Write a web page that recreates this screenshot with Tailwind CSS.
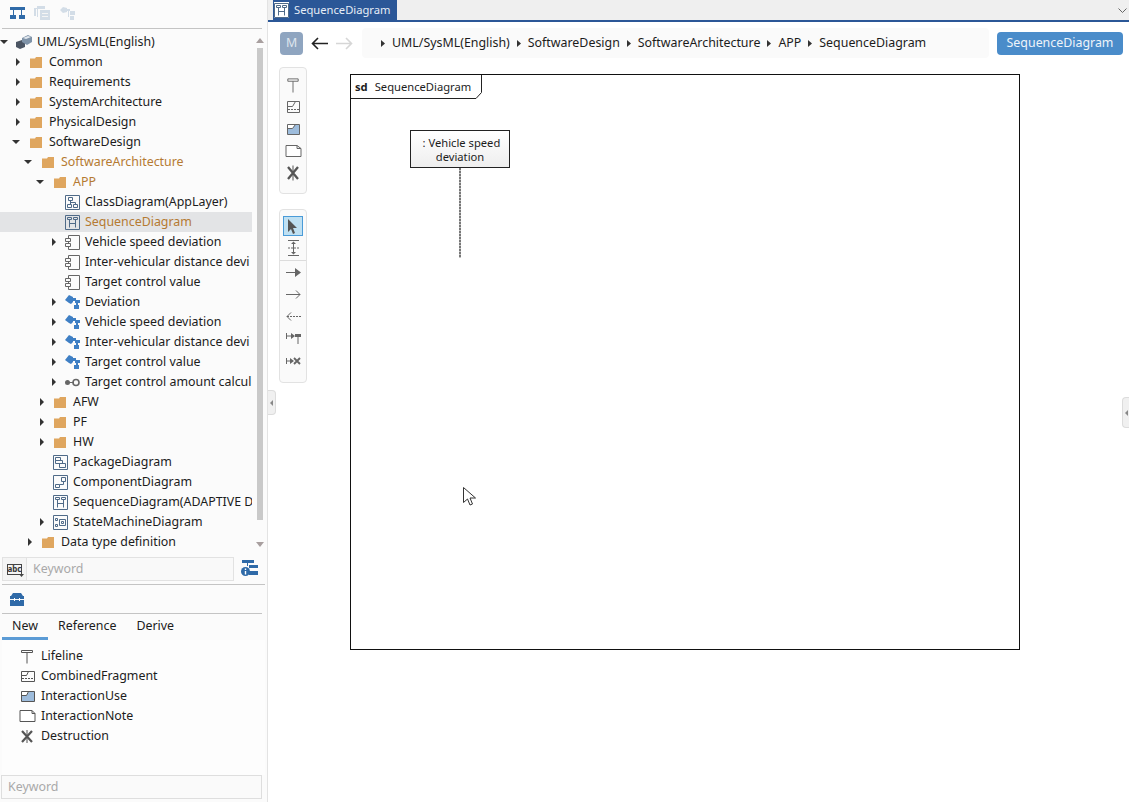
<!DOCTYPE html>
<html lang="en">
  <head>
    <meta charset="UTF-8" />
    <title>SequenceDiagram</title>
    <script src="https://cdn.jsdelivr.net/npm/@tailwindcss/browser@4"></script>
  </head>
  <body class="h-[802px] w-[1129px] overflow-hidden bg-white font-['Noto_Sans',sans-serif] text-[12.4px] text-[#1c1c1c]">
    <div class="relative flex h-full">
      <!-- Left side -->
      <aside class="flex h-full w-[268px] shrink-0 flex-col border-r border-[#e3e3e3] bg-[#fbfbfb]">
        <div class="mx-0.5 flex h-[29px] w-[260px] shrink-0 items-center gap-[9px] border-b border-[#c4c4c4] pb-0.5 pl-2">
          <svg width="15" height="13" viewBox="0 0 15 13" fill="#2f6aa8"><path d="M0 0h15v3H0zM3 3h1v5H3zM11 3h1v5h-1zM0 8h6v4H0zM9 8h6v4H9z"/></svg>
          <svg width="17" height="14" viewBox="0 0 17 14" fill="#d3dde7"><path d="M0 2h9v1H2v7H0zM3 0h8v3H4v8H3z"/><path d="M6 4h10v10H6z"/><path d="M8 7h6v1H8zM8 10h6v1H8z" fill="#f5f5f5"/></svg>
          <svg width="15" height="14" viewBox="0 0 15 14" fill="#d3dde7"><path d="M0 4l3-3 4 1v4l-4 1zM7 3h3v2H7zM10 5h5v4h-5zM10 10h4v4h-4zM8 5h1v6H8z"/></svg>
        </div>

        <div class="relative h-[528px] shrink-0 pt-[3px]">
          <div id="tree" class="w-[252px]"></div>
          <!-- scrollbar -->
          <div class="absolute top-[19px] left-[257px] h-[472px] w-[6px] bg-[#c9c9c9]"></div>
          <svg class="absolute top-[9px] left-[256px]" width="8" height="5" viewBox="0 0 8 5" fill="#a89f9f"><path d="M4 0l4 5H0z"/></svg>
          <svg class="absolute top-[513px] left-[256px]" width="8" height="5" viewBox="0 0 8 5" fill="#a89f9f"><path d="M0 0h8L4 5z"/></svg>
        </div>

        <!-- Tree search -->
        <div class="mx-0.5 flex h-[28px] shrink-0 items-start border-b border-[#c4c4c4]">
          <div class="flex h-6 w-6 items-center justify-center border border-r-0 border-[#e2e2e2] bg-[#f4f4f4]">
            <span class="relative flex h-[11px] w-[15px] items-center justify-center border border-[#444] text-[8px] leading-none font-bold text-[#333]">abc
              <svg class="absolute -right-[3px] -bottom-[3px]" width="5" height="3" viewBox="0 0 5 3" fill="#444"><path d="M0 0h5L2.500 3z"/></svg>
            </span>
          </div>
          <div class="flex h-6 w-[208px] items-center border border-[#e2e2e2] bg-[#f9f9f9] pl-1.5 text-[#a9a9a9]">Keyword</div>
          <svg class="mt-[3px] ml-[7px]" width="17" height="17" viewBox="0 0 17 17" fill="#2f6aa8"><path d="M1 0h12v3H1zM6 1h1v5H6zM8 5h9v3H8zM8 11h9v4H8z"/><circle cx="4.500" cy="11.500" r="4.500"/><path d="M3.800 8.500h1.400v1.400H3.800zM3.800 11h1.400v3.500H3.800z" fill="#fff"/></svg>
        </div>

        <!-- Toolbox -->
        <div class="mx-0.5 flex h-[29px] w-[260px] shrink-0 items-center border-b border-[#c4c4c4] pl-2">
          <svg width="14" height="13" viewBox="0 0 14 13" fill="#2f6aa8"><path d="M3 0h8l2 3H1z"/><path d="M0 3h14v3H0zM0 7h14v6H0z"/><path d="M4 5h1v3H4zM9 5h1v3H9z" fill="#fff"/></svg>
        </div>
        <div class="mx-0.5 flex h-[26px] shrink-0 items-start text-[#1c1c1c]">
          <div class="h-[26px] w-[46px] border-b-[3px] border-[#5b9bd5] pt-[3px] pl-2.5">New</div>
          <div class="pt-[3px] pl-2.5">Reference</div>
          <div class="pt-[3px] pl-5">Derive</div>
        </div>
        <div class="mx-0.5 flex-1 bg-white/60 pt-[6px]">
          <div class="flex h-5 items-center gap-[5px] pl-[17px]">
            <svg class="w-[17px]" width="17" height="15" viewBox="0 0 17 15" fill="none" stroke="#555"><path d="M2.500 1.500h11v2h-11zM8 3.500v11"/></svg>Lifeline
          </div>
          <div class="flex h-5 items-center gap-[5px] pl-[17px]">
            <svg class="w-[17px]" width="17" height="13" viewBox="0 0 17 13" fill="none" stroke="#555"><path d="M2.500 1.500h13v10h-13zM2.500 5.500h5l2-4"/><path d="M3 8.500h12" stroke-dasharray="2 1"/></svg>CombinedFragment
          </div>
          <div class="flex h-5 items-center gap-[5px] pl-[17px]">
            <svg class="w-[17px]" width="17" height="11" viewBox="0 0 17 11"><path d="M2.500.5h13v10h-13z" fill="#9dbcdc" stroke="#555"/><path d="M3 1h6.500l-2 3.500H3z" fill="#fff"/><path d="M2.500 4.500h5l2-4" fill="none" stroke="#555"/></svg>InteractionUse
          </div>
          <div class="flex h-5 items-center gap-[5px] pl-[17px]">
            <svg class="w-[17px]" width="17" height="12" viewBox="0 0 17 12" fill="#fff" stroke="#555"><path d="M1 .5h12l3 3v8H1zM13 .5v3h3"/></svg>InteractionNote
          </div>
          <div class="flex h-5 items-center gap-[5px] pl-[17px]">
            <svg class="w-[17px]" width="17" height="13" viewBox="0 0 17 13" fill="none" stroke="#555" stroke-width="2.200"><path d="M3 1l10 11M13 1L3 12"/><path d="M8 0v13" stroke-width="1"/></svg>Destruction
          </div>
        </div>
        <div class="mx-px mb-[3px] flex h-6 w-[261px] shrink-0 items-center border border-[#dedede] bg-[#fafafa] pl-1.5 text-[#a9a9a9]">Keyword</div>
      </aside>

      <!-- Right side -->
      <main class="flex h-full min-w-0 flex-1 flex-col">
        <div class="flex h-[22px] shrink-0 items-start justify-between border-b-2 border-[#2b5797] bg-[#efefef] pl-[5px]">
          <div class="flex h-5 w-[124px] items-center gap-[5px] bg-[#2b5797] pl-[1px] text-[11.2px] text-[#e6edf6]">
            <span class="flex h-[16px] w-[15px] items-center justify-center bg-white">
              <svg width="15" height="15" viewBox="0 0 15 15" fill="none" stroke="#4f6a88"><path d="M.5.5h14v14H.5zM2.500 2.500h4v2h-4zM8.500 2.500h4v2h-4zM4.500 4.500v8M10.500 4.500v8M4.500 8.500h6"/></svg>
            </span>
            SequenceDiagram
          </div>
          <svg class="mt-2 mr-[2px]" width="9" height="6" viewBox="0 0 9 6" fill="none" stroke="#666"><path d="M.5.5l4 4 4-4"/></svg>
        </div>

        <!-- Navigation -->
        <div class="flex h-9 shrink-0 items-center pt-[6px] pl-3">
          <div class="flex h-[23px] w-[23px] items-center justify-center rounded-sm bg-[#8fa5c0] text-[#dfe6ee]">M</div>
          <svg class="ml-[8px]" width="17" height="13" viewBox="0 0 17 13" fill="none" stroke="#222" stroke-width="1.600"><path d="M17 6.500H2M7 1L1.500 6.500 7 12"/></svg>
          <svg class="ml-[8px]" width="17" height="13" viewBox="0 0 17 13" fill="none" stroke="#d6d6d6" stroke-width="1.600"><path d="M0 6.500h15M10 1l5.500 5.500L10 12"/></svg>
          <div class="ml-[9px] flex h-[30px] w-[627px] shrink-0 items-center gap-[7px] rounded bg-[#fafafa] pl-[19px]">
            <svg width="4" height="7" viewBox="0 0 4 7" fill="#333"><path d="M0 0l4 3.500L0 7z"/></svg>UML/SysML(English)
            <svg width="4" height="7" viewBox="0 0 4 7" fill="#333"><path d="M0 0l4 3.500L0 7z"/></svg>SoftwareDesign
            <svg width="4" height="7" viewBox="0 0 4 7" fill="#333"><path d="M0 0l4 3.500L0 7z"/></svg>SoftwareArchitecture
            <svg width="4" height="7" viewBox="0 0 4 7" fill="#333"><path d="M0 0l4 3.500L0 7z"/></svg>APP
            <svg width="4" height="7" viewBox="0 0 4 7" fill="#333"><path d="M0 0l4 3.500L0 7z"/></svg>SequenceDiagram
          </div>
          <div class="ml-2 flex h-[23px] w-[126px] shrink-0 items-center justify-center rounded-sm bg-[#4a8cca] text-[#eef4fa]">SequenceDiagram</div>
        </div>

        <!-- Editor -->
        <div class="flex flex-1 items-start pt-[9px] pl-[11px]">
          <div class="flex w-[28px] shrink-0 flex-col gap-[15px]">
            <div class="flex h-[127px] flex-col items-center gap-[6px] rounded-sm border border-[#e2e2e2] bg-[#fafafa] pt-[9px]">
              <svg width="16" height="16" viewBox="0 0 17 16" fill="none" stroke="#666"><path d="M3 1.500h11v2.500H3zM8.500 4v12"/></svg>
              <svg width="16" height="16" viewBox="0 0 16 16" fill="none" stroke="#666"><path d="M2.500 2.500h12v11h-12zM2.500 7.500h5l3-5"/><path d="M3 10.500h11" stroke-dasharray="2 1"/></svg>
              <svg width="16" height="16" viewBox="0 0 16 16"><path d="M2.500 3.500h12v10h-12z" fill="#9dbcdc" stroke="#666"/><path d="M3 4h6.500l-2 3.500H3z" fill="#fff"/><path d="M2.500 7.500h5l3-4" fill="none" stroke="#666"/></svg>
              <svg width="17" height="16" viewBox="0 0 17 16" fill="#fff" stroke="#666"><path d="M1 2.500h11l4 3v8H1zM12 2.500v3h4"/></svg>
              <svg width="17" height="16" viewBox="0 0 17 16" fill="none" stroke="#555" stroke-width="2.300"><path d="M3 2l10 12M13 2L3 14"/><path d="M8 .5v15" stroke-width="1"/></svg>
            </div>
            <div class="flex h-[174px] flex-col items-center rounded-sm border border-[#e2e2e2] bg-[#fafafa] pt-[6px]">
              <div class="flex h-5 w-5 items-center justify-center border border-[#4a9bd8] bg-[#bfe0f2]">
                <svg width="10" height="15" viewBox="0 0 10 15" fill="#555"><path d="M0 0l9 9H5l2 5-2 1-2-5-3 3z"/></svg>
              </div>
              <div class="flex h-6 items-center">
                <svg width="13" height="16" viewBox="0 0 13 16" fill="#666"><path d="M1 0h11v1H1zM1 15h11v1H1zM6 3h1v10H6zM6.500 1.500L9 4H4zM6.500 14.500L4 12h5z"/><path d="M1 8h11" stroke="#666" stroke-dasharray="2 1"/></svg>
              </div>
              <div class="h-px w-full bg-[#dcdcdc]"></div>
              <div class="flex h-[22px] items-center pt-[1px]">
                <svg width="15" height="9" viewBox="0 0 15 9" fill="#666"><path d="M0 4h10v1H0zM9 0l6 4.500L9 9z"/></svg>
              </div>
              <div class="flex h-[22px] items-center">
                <svg width="15" height="9" viewBox="0 0 15 9" fill="none" stroke="#666"><path d="M0 4.500h14M10 .5l4 4-4 4"/></svg>
              </div>
              <div class="flex h-[23px] items-center">
                <svg width="15" height="9" viewBox="0 0 15 9" fill="none" stroke="#666"><path d="M15 4.500H1" stroke-dasharray="2 1"/><path d="M5 .5l-4 4 4 4"/></svg>
              </div>
              <div class="flex h-[21px] items-center">
                <svg width="15" height="11" viewBox="0 0 15 11" fill="#666"><path d="M0 0h1v6H0zM1 2.500h5v1H1zM5 0l4 3-4 3zM9 1h6v3H9zM11.500 4h1v7h-1z"/></svg>
              </div>
              <div class="flex h-[24px] items-center">
                <svg width="15" height="8" viewBox="0 0 15 8" fill="#666"><path d="M0 1h1v6H0zM1 3.500h5v1H1zM4 1l4 3-4 3z"/><path d="M8 1l6 6M14 1L8 7" stroke="#666" stroke-width="1.900"/></svg>
              </div>
            </div>
          </div>

          <!-- Diagram canvas -->
          <div class="relative mt-[7px] ml-[43px] h-[576px] w-[670px] border border-[#111] bg-white text-[11.2px]">
            <div class="absolute top-0 left-0 flex h-[24px] w-[131px] items-center gap-[7px] pl-1">
              <b class="font-bold">sd</b>SequenceDiagram
            </div>
            <svg class="absolute top-0 left-0" width="132" height="25" viewBox="0 0 132 25" fill="none" stroke="#222"><path d="M0 23.500h125l5.500-6V0"/></svg>
            <div class="absolute top-[55px] left-[59px] flex h-[38px] w-[100px] flex-col items-center justify-center border border-[#222] bg-linear-to-b from-white to-[#eeeeee] pt-[1px] text-center leading-[14px]">
              <span>&nbsp;: Vehicle speed</span><span>deviation</span>
            </div>
            <div class="absolute top-[93px] left-[108px] h-[90px] w-[2px] bg-[repeating-linear-gradient(to_bottom,#777_0,#777_2px,#c4c4c4_2px,#c4c4c4_3px)]"></div>
          </div>
        </div>
      </main>

      <!-- Splitter handles -->
      <div class="absolute top-[390px] left-[268px] flex h-[25px] w-[8px] items-center justify-center rounded-r-sm border border-l-0 border-[#dcdcdc] bg-[#f0f0f0]">
        <svg width="3" height="6" viewBox="0 0 3 6" fill="#888"><path d="M3 0v6L0 3z"/></svg>
      </div>
      <div class="absolute top-[397px] left-[1122px] flex h-[31px] w-[7px] items-center justify-center rounded-l-sm border border-r-0 border-[#dcdcdc] bg-[#f0f0f0]">
        <svg width="3" height="6" viewBox="0 0 3 6" fill="#888"><path d="M3 0v6L0 3z"/></svg>
      </div>

      <!-- Mouse cursor -->
      <svg class="absolute top-[487px] left-[463px]" width="13" height="19" viewBox="0 0 13 19" fill="#fff" stroke="#333"><path d="M.5.5v15l4-3.500 2.500 6 2.500-1-2.500-6h5.500z"/></svg>
    </div>

    <script>
      const frame = (inner) =>
        `<svg width="15" height="15" viewBox="0 0 15 15" fill="none" stroke="#4f6a88"><path d="M.5.5h14v14H.5z"/>${inner}</svg>`;
      const component = `<svg width="15" height="15" viewBox="0 0 15 15" fill="none" stroke="#666"><path d="M3.500 3.500v-3h11v14h-11v-3M3.500 6.500v2"/><path d="M.5 3.500h5v3h-5zM.5 8.500h5v3h-5z"/></svg>`;
      const signal = `<svg width="15" height="14" viewBox="0 0 15 14" fill="#3f7fc4"><path d="M4 0l4 2v5L6 9 4 8 0 5zM8 3h3v3H8zM10 5h5v3h-5zM11 8h2v2h-2zM9 10h5v4H9z"/></svg>`;
      const iface = `<svg width="15" height="9" viewBox="0 0 15 9" fill="#666"><circle cx="2.500" cy="4.500" r="2.500"/><path d="M4 4h5v1H4z"/><circle cx="11" cy="4.500" r="3" fill="none" stroke="#666" stroke-width="1.600"/></svg>`;
      const folder = `<svg width="12" height="11" viewBox="0 0 12 11" fill="#dfa65f"><path d="M0 1.500h5L6 0h6v11H0z"/></svg>`;
      const icons = {
        folder,
        component,
        signal,
        iface,
        model: `<svg width="16" height="14" viewBox="0 0 16 14"><path d="M0 7l6-2 3 2v5l-5 2-4-2z" fill="#4b5563"/><path d="M6 3l6-3 4 2v5l-5 3-5-3z" fill="#7f93a8"/><path d="M7 3l5-2 3 1-5 2z" fill="#e3e9ef"/></svg>`,
        cls: frame('<path d="M3.500 2.500h4v3h-4zM2.500 9.500h4v3h-4zM8.500 9.500h4v3h-4zM5.500 5.500v4M10.500 9.500v-2h-5"/>'),
        seq: frame('<path d="M2.500 2.500h4v2h-4zM8.500 2.500h4v2h-4zM4.500 4.500v8M10.500 4.500v8M4.500 8.500h6"/>'),
        pkg: frame('<path d="M2.500 2.500h5v3h-5zM2.500 5.500h7v3h-7zM6.500 8.500h6v4h-6z"/>'),
        cmp: frame('<path d="M8.500 2.500h4v4h-4zM2.500 9.500h4v3h-4zM10.500 6.500v3h-4"/>'),
        stm: frame('<path d="M2.500 3.500h2v2h-2zM2.500 9.500h2v2h-2zM6.500 4.500h6v6h-6zM8.500 6.500h2v2h-2z"/>'),
      };

      // level, arrow ("r", "d" or ""), icon, label, highlighted, selected
      const rows = [
        [0, "d", "model", "UML/SysML(English)"],
        [1, "r", "folder", "Common"],
        [1, "r", "folder", "Requirements"],
        [1, "r", "folder", "SystemArchitecture"],
        [1, "r", "folder", "PhysicalDesign"],
        [1, "d", "folder", "SoftwareDesign"],
        [2, "d", "folder", "SoftwareArchitecture", true],
        [3, "d", "folder", "APP", true],
        [4, "", "cls", "ClassDiagram(AppLayer)"],
        [4, "", "seq", "SequenceDiagram", true, true],
        [4, "r", "component", "Vehicle speed deviation"],
        [4, "", "component", "Inter-vehicular distance devi"],
        [4, "", "component", "Target control value"],
        [4, "r", "signal", "Deviation"],
        [4, "r", "signal", "Vehicle speed deviation"],
        [4, "r", "signal", "Inter-vehicular distance devi"],
        [4, "r", "signal", "Target control value"],
        [4, "r", "iface", "Target control amount calcul"],
        [3, "r", "folder", "AFW"],
        [3, "r", "folder", "PF"],
        [3, "r", "folder", "HW"],
        [3, "", "pkg", "PackageDiagram"],
        [3, "", "cmp", "ComponentDiagram"],
        [3, "", "seq", "SequenceDiagram(ADAPTIVE D"],
        [3, "r", "stm", "StateMachineDiagram"],
        [2, "r", "folder", "Data type definition"],
      ];
      const indent = ["pl-[1px]", "pl-[13px]", "pl-[25px]", "pl-[37px]", "pl-[49px]"];
      const arrows = {
        r: `<svg class="ml-[3px]" width="4" height="8" viewBox="0 0 4 8" fill="#333"><path d="M0 0l4 4-4 4z"/></svg>`,
        d: `<svg class="ml-[-1px]" width="8" height="4" viewBox="0 0 8 4" fill="#333"><path d="M0 0h8L4 4z"/></svg>`,
        "": "",
      };

      document.getElementById("tree").innerHTML = rows
        .map(([level, arrow, icon, label, hot, selected]) => `
          <div class="flex h-5 items-center overflow-hidden whitespace-nowrap ${indent[level]} ${selected ? "bg-[#e3e4e6]" : ""} ${hot ? "text-[#b57a32]" : ""}">
            <span class="flex w-[15px] shrink-0 items-center">${arrows[arrow]}</span>
            <span class="flex w-[16px] shrink-0 items-center justify-center">${icons[icon]}</span>
            <span class="ml-[5px]">${label}</span>
          </div>`)
        .join("");
    </script>
  </body>
</html>
